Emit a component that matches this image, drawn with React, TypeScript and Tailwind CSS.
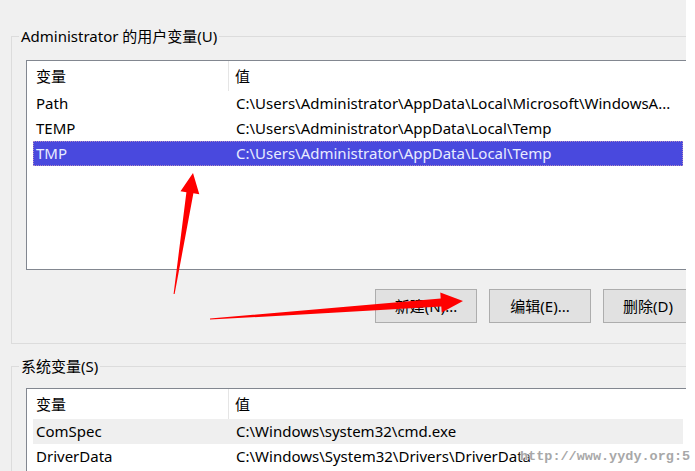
import type { ReactNode } from 'react';

const userVars = [
  { name: 'Path', value: 'C:\\Users\\Administrator\\AppData\\Local\\Microsoft\\WindowsA...' },
  { name: 'TEMP', value: 'C:\\Users\\Administrator\\AppData\\Local\\Temp' },
  { name: 'TMP', value: 'C:\\Users\\Administrator\\AppData\\Local\\Temp', selected: true },
];

const systemVars = [
  { name: 'ComSpec', value: 'C:\\Windows\\system32\\cmd.exe', hover: true },
  { name: 'DriverData', value: 'C:\\Windows\\System32\\Drivers\\DriverData' },
];

type Row = { name: string; value: string; selected?: boolean; hover?: boolean };

function ListBox({ rows, height }: { rows: Row[]; height: string }) {
  return (
    <div className={`${height} ml-[14px] w-[680px] border border-r-0 border-[#828790] bg-white overflow-hidden`}>
      <div className="flex h-[30px] items-center pl-[6px]">
        <div className="w-[196px] h-full flex items-center pl-[3px] border-r border-[#e5e5e5]">变量</div>
        <div className="pl-[6px]">值</div>
      </div>
      {rows.map((r) => (
        <div
          key={r.name}
          className={`flex h-[25px] items-center ml-[6px] w-[650px] ${
            r.selected
              ? 'bg-[#4949de] text-[#e8ecff] outline-1 outline-dotted outline-[#b08cc0] -outline-offset-1'
              : r.hover
              ? 'bg-[#efefef]'
              : ''
          }`}
        >
          <div className="w-[203px] pl-[3px]">{r.name}</div>
          <div className="whitespace-nowrap">{r.value}</div>
        </div>
      ))}
    </div>
  );
}

function Group({ title, children, className }: { title: string; children: ReactNode; className?: string }) {
  return (
    <fieldset className={`w-[690px] border border-[#dcdcdc] ${className ?? ''}`}>
      <legend className="ml-[7px] px-[2px] leading-[20px]">{title}</legend>
      {children}
    </fieldset>
  );
}

function Button({ label, width = 'w-[102px]' }: { label: string; width?: string }) {
  return (
    <button className={`${width} h-[34px] shrink-0 border border-[#adadad] bg-[#e1e1e1] text-[15px] text-black`}>
      {label}
    </button>
  );
}

export default function App() {
  return (
    <div
      className="relative flex w-[695px] h-[471px] bg-white overflow-hidden text-[15px] text-black"
      style={{ fontFamily: '"Noto Sans", "Noto Sans CJK SC", sans-serif' }}
    >
      <div className="w-[686px] h-full bg-[#f0f0f0] pt-[26px] pl-[11px] overflow-hidden">
        <Group title="Administrator 的用户变量(U)" className="pb-[20px]">
          <div className="mt-[14px]">
            <ListBox rows={userVars} height="h-[210px]" />
          </div>
          <div className="mt-[19px] flex gap-[12px] pl-[363px]">
            <Button label="新建(N)..." />
            <Button label="编辑(E)..." />
            <Button label="删除(D)" width="w-[90px]" />
          </div>
        </Group>
        <Group title="系统变量(S)" className="mt-[12px] h-[200px]">
          <div className="mt-[12px]">
            <ListBox rows={systemVars} height="h-[120px]" />
          </div>
        </Group>
      </div>

      {/* watermark */}
      <div
        className="absolute left-[520px] top-[447px] text-[13.5px] font-bold text-[#a8a8a8] [text-shadow:0_0_2px_#fff,0_0_2px_#fff]"
        style={{ fontFamily: '"Liberation Mono", monospace' }}
      >
        http://www.yydy.org:5
      </div>

      {/* red annotation arrows */}
      <svg className="absolute inset-0 pointer-events-none" width="695" height="471">
        <polygon
          fill="#ff0000"
          points="193,173 199.3,194.3 193.4,193.3 174.6,294 173.6,294 186.4,192.3 180.5,191.3"
        />
        <polygon
          fill="#ff0000"
          points="463,301 441.7,312.6 441.3,306.6 210,319.6 210,318.6 440.7,298.6 440.3,292.6"
        />
      </svg>
    </div>
  );
}
